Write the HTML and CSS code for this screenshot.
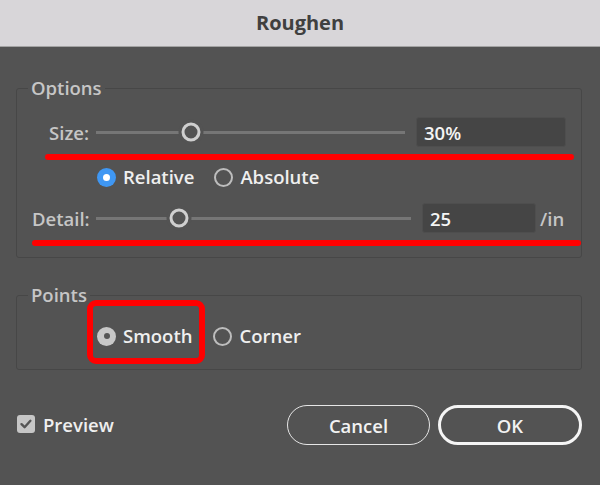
FILE: index.html
```html
<!DOCTYPE html>
<html>
<head>
<meta charset="utf-8">
<link rel="stylesheet" href="styles.css">
</head>
<body>
<div class="titlebar">Roughen</div>
<div class="dialog">
  <fieldset class="group options">
    <legend>Options</legend>
    <div class="row">
      <span class="label">Size:</span>
      <div class="slider"><span class="thumb" style="left:30.9%"></span></div>
      <div class="field wide">30%</div>
    </div>
    <div class="mark mark1"></div>
    <div class="radios">
      <span class="opt"><span class="radio on"></span>Relative</span>
      <span class="opt"><span class="radio"></span>Absolute</span>
    </div>
    <div class="row detail">
      <span class="label">Detail:</span>
      <div class="slider"><span class="thumb" style="left:26.3%"></span></div>
      <div class="field narrow">25</div>
      <span class="unit">/in</span>
    </div>
    <div class="mark mark2"></div>
  </fieldset>

  <fieldset class="group points">
    <legend>Points</legend>
    <div class="radios pts">
      <span class="opt boxed"><span class="radio dim"></span>Smooth</span>
      <span class="opt corner"><span class="radio"></span>Corner</span>
    </div>
  </fieldset>

  <div class="footer">
    <span class="check"><span class="box"><svg width="18" height="18" viewBox="0 0 18 18"><path d="M4.5 9.2 L7.6 12.2 L13.4 5.8" fill="none" stroke="#555" stroke-width="2.4" stroke-linecap="round" stroke-linejoin="round"/></svg></span>Preview</span>
    <div class="buttons">
      <span class="btn">Cancel</span>
      <span class="btn primary">OK</span>
    </div>
  </div>
</div>
</body>
</html>
```
FILE: styles.css
```css
html, body {
  margin: 0;
  padding: 0;
}
body {
  width: 600px;
  height: 485px;
  background: #535353;
  font-family: "Open Sans", "Noto Sans", sans-serif;
  font-size: 18.5px;
  font-weight: 600;
  color: #efefef;
  overflow: hidden;
}
.titlebar {
  height: 44px;
  padding-bottom: 2px;
  background: #d8d6d9;
  border-bottom: 1px solid #a3a3a3;
  color: #404040;
  font-size: 20px;
  font-weight: 700;
  display: flex;
  align-items: center;
  justify-content: center;
}
.dialog {
  padding: 29px 18px 0 16px;
}
.group {
  margin: 0;
  border: 1px solid #474747;
  border-radius: 3px;
  min-width: 0;
}
.group legend {
  margin-left: -4px;
  padding: 0 3px;
  line-height: 24px;
  color: #c6c6c6;
}
.options {
  padding: 17px 15px 11px 15px;
}
.row {
  display: flex;
  align-items: center;
  height: 30px;
}
.label {
  width: 57px;
  text-align: right;
  color: #c6c6c6;
  margin-right: 7px;
}
.slider {
  flex: 1;
  height: 3px;
  background: #767676;
  position: relative;
  margin-right: 11px;
}
.thumb {
  position: absolute;
  top: 50%;
  width: 13px;
  height: 13px;
  border: 3px solid #cfcfcf;
  border-radius: 50%;
  background: #535353;
  box-shadow: 0 0 0 3px #535353;
  transform: translate(-50%, -50%);
}
.field {
  box-sizing: border-box;
  height: 30px;
  border: 1px solid #4e4e4e;
  background: #454545;
  border-radius: 3px;
  padding-left: 7px;
  display: flex;
  align-items: center;
  color: #f4f4f4;
}
.field.wide {
  width: 150px;
}
.field.narrow {
  width: 114px;
}
.unit {
  margin-left: 4px;
  margin-right: 2px;
  width: 24px;
  color: #c6c6c6;
}
.detail {
  margin-top: 14px;
}
.mark {
  height: 6px;
  background: #ff0000;
  border-radius: 3px;
  margin-top: 7px;
}
.mark1 {
  margin-left: 13px;
  margin-right: -8px;
}
.mark2 {
  margin-right: -15px;
}
.radios {
  display: flex;
  align-items: center;
  height: 24px;
  margin-top: 5px;
  margin-left: 65px;
  gap: 20px;
}
.opt {
  display: flex;
  align-items: center;
  gap: 7px;
  line-height: 24px;
}
.radio {
  width: 19px;
  height: 19px;
  box-sizing: border-box;
  border-radius: 50%;
  border: 2px solid #bdbdbd;
  display: inline-flex;
  align-items: center;
  justify-content: center;
}
.radio.on {
  border: none;
  background: #3f97f3;
}
.radio.on::after {
  content: "";
  width: 7px;
  height: 7px;
  border-radius: 50%;
  background: #ffffff;
}
.radio.dim {
  border: none;
  background: #c8c8c8;
}
.radio.dim::after {
  content: "";
  width: 6px;
  height: 6px;
  border-radius: 50%;
  background: #555555;
}
.points {
  margin-top: 25px;
  padding: 0 15px 5px 15px;
}
.radios.pts {
  height: auto;
  margin-top: -7px;
  margin-left: 55px;
  align-items: flex-end;
  gap: 8px;
}
.boxed {
  border: 6px solid #ff0000;
  border-radius: 9px;
  padding: 18px 7px 10px 4px;
}
.corner {
  margin-bottom: 16px;
}
.footer {
  margin-top: 35px;
  display: flex;
  align-items: center;
  justify-content: space-between;
}
.check {
  display: flex;
  align-items: center;
  gap: 8px;
  margin-left: 1px;
  margin-top: -2px;
}
.box {
  width: 18px;
  height: 18px;
  border-radius: 3px;
  background: #c6c6c6;
  display: inline-flex;
}
.buttons {
  display: flex;
  gap: 8px;
}
.btn {
  box-sizing: border-box;
  width: 143px;
  height: 40px;
  border: 1.5px solid #e6e6e6;
  border-radius: 20px;
  display: flex;
  align-items: center;
  justify-content: center;
  color: #f2f2f2;
}
.btn.primary {
  width: 144px;
  border: 3px solid #f5f5f5;
}
```
